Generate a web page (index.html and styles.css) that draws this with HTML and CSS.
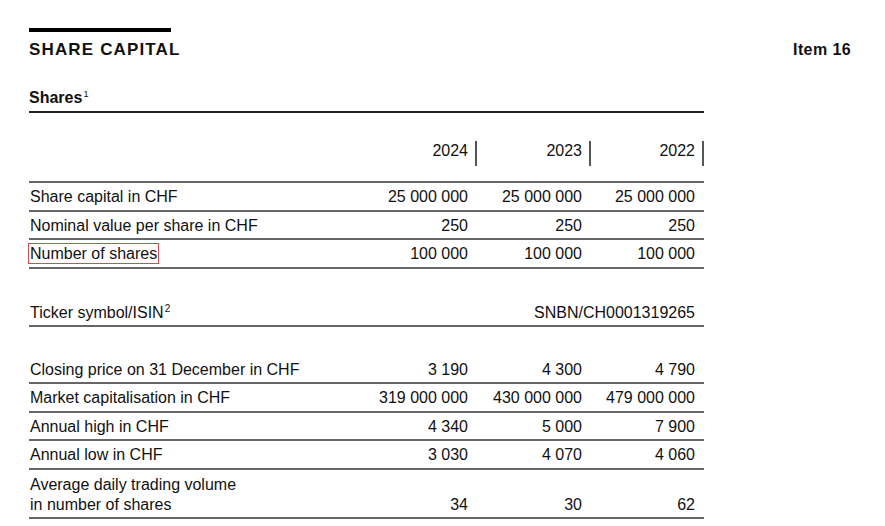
FILE: index.html
```html
<!DOCTYPE html>
<html lang="en">
<head>
<meta charset="utf-8">
<title>Share capital</title>
<link rel="stylesheet" href="styles.css">
</head>
<body>
<div class="page">
  <header class="top">
    <div class="titleblock">
      <div class="bar"></div>
      <h1 class="title">SHARE CAPITAL</h1>
    </div>
    <div class="item">Item 16</div>
  </header>

  <h2 class="sub">Shares<sup>1</sup></h2>

  <table class="tbl">
    <colgroup>
      <col class="c-label">
      <col class="c-val">
      <col class="c-val">
      <col class="c-last">
    </colgroup>
    <thead>
      <tr>
        <th></th>
        <th><span class="yr">2024</span></th>
        <th><span class="yr">2023</span></th>
        <th><span class="yr">2022</span></th>
      </tr>
    </thead>
    <tbody>
      <tr><td>Share capital in CHF</td><td class="num">25 000 000</td><td class="num">25 000 000</td><td class="num">25 000 000</td></tr>
      <tr><td>Nominal value per share in CHF</td><td class="num">250</td><td class="num">250</td><td class="num">250</td></tr>
      <tr><td><span class="mark">Number of shares</span></td><td class="num">100 000</td><td class="num">100 000</td><td class="num">100 000</td></tr>
      <tr class="gap gap-a"><td colspan="4"></td></tr>
      <tr><td>Ticker symbol/ISIN<sup>2</sup></td><td class="num" colspan="3">SNBN/CH0001319265</td></tr>
      <tr class="gap gap-b"><td colspan="4"></td></tr>
      <tr><td>Closing price on 31 December in CHF</td><td class="num">3 190</td><td class="num">4 300</td><td class="num">4 790</td></tr>
      <tr><td>Market capitalisation in CHF</td><td class="num">319 000 000</td><td class="num">430 000 000</td><td class="num">479 000 000</td></tr>
      <tr><td>Annual high in CHF</td><td class="num">4 340</td><td class="num">5 000</td><td class="num">7 900</td></tr>
      <tr><td>Annual low in CHF</td><td class="num">3 030</td><td class="num">4 070</td><td class="num">4 060</td></tr>
      <tr class="two"><td>Average daily trading volume<br>in number of shares</td><td class="num">34</td><td class="num">30</td><td class="num">62</td></tr>
    </tbody>
  </table>
</div>
</body>
</html>
```

FILE: styles.css
```css
* { box-sizing: border-box; }
html, body { margin: 0; background: #fff; }
body {
  font-family: "Liberation Sans", Arial, sans-serif;
  color: #111;
}
.page { padding: 28px 34px 0 29px; }

.top {
  display: flex;
  justify-content: space-between;
  align-items: baseline;
}
.bar { width: 142px; height: 4px; background: #000; }
.title {
  margin: 8px 0 0;
  font-size: 17px;
  line-height: 20px;
  font-weight: 700;
  letter-spacing: 1.15px;
}
.item {
  font-size: 16px;
  line-height: 20px;
  font-weight: 700;
  letter-spacing: 0.4px;
}

.sub {
  margin: 29px 0 0;
  width: 675px;
  font-size: 16px;
  line-height: 18px;
  font-weight: 700;
  padding-bottom: 4px;
  border-bottom: 2px solid #222;
}
.sub sup {
  font-size: 9px;
  font-weight: 400;
  vertical-align: 6px;
  line-height: 0;
  margin-left: 1px;
}

.tbl {
  width: 675px;
  table-layout: fixed;
  border-collapse: separate;
  border-spacing: 0;
  font-size: 16px;
}
.c-label { width: 334px; }
.c-val { width: 114px; }
.c-last { width: 113px; }

.tbl th {
  padding: 28px 0 15px;
  text-align: right;
  font-weight: 400;
  vertical-align: top;
  border-bottom: 2px solid #666;
  line-height: 20px;
}
.yr {
  display: inline-block;
  line-height: 20px;
  padding: 0 7px 5px 0;
  border-right: 2px solid #555;
  vertical-align: top;
}

.tbl td {
  padding: 1px 9px 0 1px;
  line-height: 25.5px;
  border-bottom: 2px solid #666;
  white-space: nowrap;
}
.tbl td.num { text-align: right; }
.tbl td sup {
  font-size: 10px;
  vertical-align: 6px;
  line-height: 0;
  margin-left: 1px;
}

.tbl tr.gap td { border-bottom: 0; padding: 0; line-height: 0; }
.tbl tr.gap-a td { height: 30px; }
.tbl tr.gap-b td { height: 28.5px; }

.tbl tr.two td {
  line-height: 20px;
  padding-top: 5.5px;
  padding-bottom: 2px;
  vertical-align: bottom;
}

.mark {
  outline: 1.5px solid #e0474c;
  outline-offset: 1px;
}
```
